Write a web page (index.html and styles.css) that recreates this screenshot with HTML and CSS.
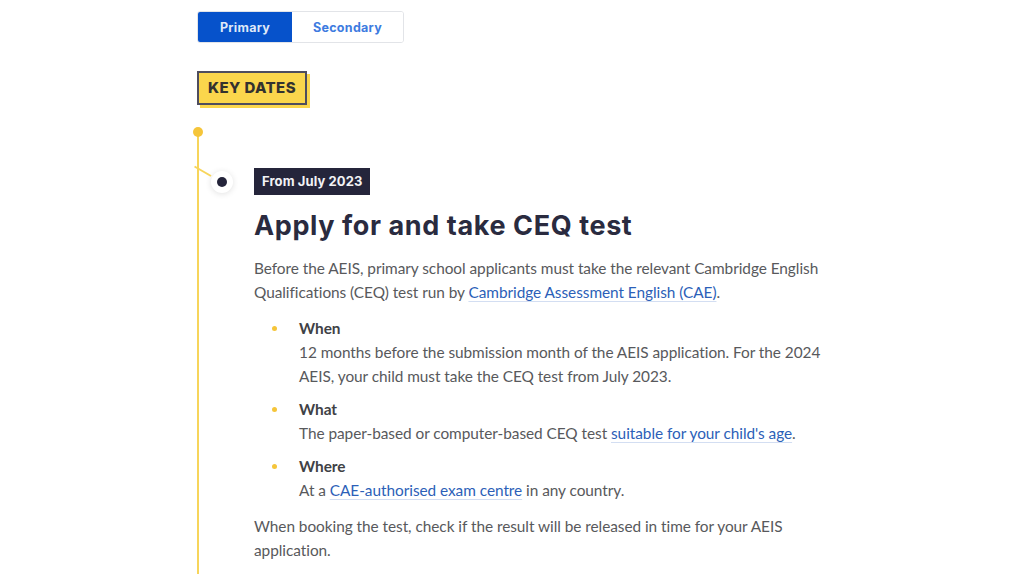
FILE: index.html
```html
<!DOCTYPE html>
<html lang="en">
<head>
    <meta charset="UTF-8">
    <meta name="viewport" content="width=device-width, initial-scale=1.0">
    <title>AEIS Key Dates</title>
    <link rel="stylesheet" href="styles.css">
</head>
<body>
    <div class="page">
        <div class="tabs">
            <button class="tab active">Primary</button>
            <button class="tab">Secondary</button>
        </div>

        <div class="key-dates">KEY DATES</div>

        <div class="timeline">
            <div class="step">
                <span class="marker"></span>
                <span class="date-tag">From July 2023</span>
                <h2>Apply for and take CEQ test</h2>
                <p>Before the AEIS, primary school applicants must take the relevant Cambridge English Qualifications (CEQ) test run by <a href="#">Cambridge Assessment English (CAE)</a>.</p>
                <ul class="details">
                    <li>
                        <strong>When</strong>
                        <span>12 months before the submission month of the AEIS application. For the 2024 AEIS, your child must take the CEQ test from July 2023.</span>
                    </li>
                    <li>
                        <strong>What</strong>
                        <span>The paper-based or computer-based CEQ test <a href="#">suitable for your child's age</a>.</span>
                    </li>
                    <li>
                        <strong>Where</strong>
                        <span>At a <a href="#">CAE-authorised exam centre</a> in any country.</span>
                    </li>
                </ul>
                <p>When booking the test, check if the result will be released in time for your AEIS application.</p>
            </div>
        </div>
    </div>
</body>
</html>
```

FILE: styles.css
```css
body {
    margin: 0;
    background: #fff;
    font-family: 'Lato', 'Open Sans', sans-serif;
    color: #58595c;
}
.page {
    width: 650px;
    margin-left: 197px;
    padding-top: 11px;
}
.tabs {
    display: flex;
    width: fit-content;
    border: 1px solid #e2e4e8;
    border-radius: 3px;
    overflow: hidden;
}
.tab {
    font-family: 'Inter', 'Open Sans', sans-serif;
    font-weight: 700;
    font-size: 12.5px;
    letter-spacing: 0.3px;
    height: 30px;
    padding: 0;
    border: none;
    background: #fff;
    color: #3d7be0;
    cursor: pointer;
}
.tab.active {
    width: 94px;
    background: #0652cb;
    color: #dfe8f8;
}
.tab:not(.active) {
    width: 111px;
}
.key-dates {
    width: fit-content;
    margin-top: 28px;
    padding: 0 9px;
    height: 30px;
    line-height: 30px;
    border: 2px solid #4e4d5e;
    background: #fbd64c;
    box-shadow: 3px 3px 0 #fbd64c;
    font-family: 'Inter', 'Open Sans', sans-serif;
    font-weight: 800;
    font-size: 15px;
    color: #33322f;
    letter-spacing: 0.4px;
}
.timeline {
    position: relative;
    margin-top: 27px;
    padding-left: 55px;
    border-left: 2px solid #f7d55b;
    padding-top: 36px;
    padding-bottom: 40px;
}
.timeline::before {
    content: '';
    position: absolute;
    left: -6px;
    top: -5px;
    width: 10px;
    height: 10px;
    border-radius: 50%;
    background: #f5c53a;
}
.step {
    position: relative;
}
.marker {
    position: absolute;
    left: -43px;
    top: 3px;
    width: 22px;
    height: 22px;
    border-radius: 50%;
    background: #fff;
    box-shadow: 0 1px 6px rgba(0, 0, 0, 0.12);
}
.marker::before {
    content: '';
    position: absolute;
    left: 6px;
    top: 6px;
    width: 10px;
    height: 10px;
    border-radius: 50%;
    background: #24243a;
}
.marker::after {
    content: '';
    position: absolute;
    left: -19px;
    top: 4px;
    width: 19px;
    height: 2px;
    background: #f7d55b;
    transform: rotate(30deg);
    transform-origin: right center;
}
.date-tag {
    display: inline-block;
    background: #25253b;
    color: #f2f2f5;
    font-family: 'Inter', 'Open Sans', sans-serif;
    font-weight: 700;
    font-size: 13px;
    padding: 0 8px;
    height: 27px;
    line-height: 27px;
    letter-spacing: 0.1px;
}
h2 {
    margin: 14px 0 0;
    font-family: 'Inter', 'Open Sans', sans-serif;
    font-weight: 700;
    font-size: 27px;
    line-height: 34px;
    color: #2a2b3f;
    letter-spacing: 0.6px;
}
p {
    margin: 13px 0 0;
    font-size: 15.4px;
    line-height: 24px;
    letter-spacing: -0.05px;
}
a {
    color: #2c5fb8;
    text-decoration: underline;
    text-decoration-color: #d3def2;
    text-underline-offset: 3px;
}
.details {
    list-style: none;
    margin: 12px 0 0;
    padding: 0 0 0 45px;
    font-size: 15.4px;
    line-height: 24px;
    letter-spacing: -0.05px;
}
.details li {
    position: relative;
    margin-bottom: 9px;
}
.details li::before {
    content: '';
    position: absolute;
    left: -27px;
    top: 10px;
    width: 5px;
    height: 5px;
    border-radius: 50%;
    background: #f5c53a;
}
.details strong {
    display: block;
    font-weight: 700;
    color: #404145;
}
.details span {
    display: block;
}
.details + p {
    margin-top: 12px;
}
```
